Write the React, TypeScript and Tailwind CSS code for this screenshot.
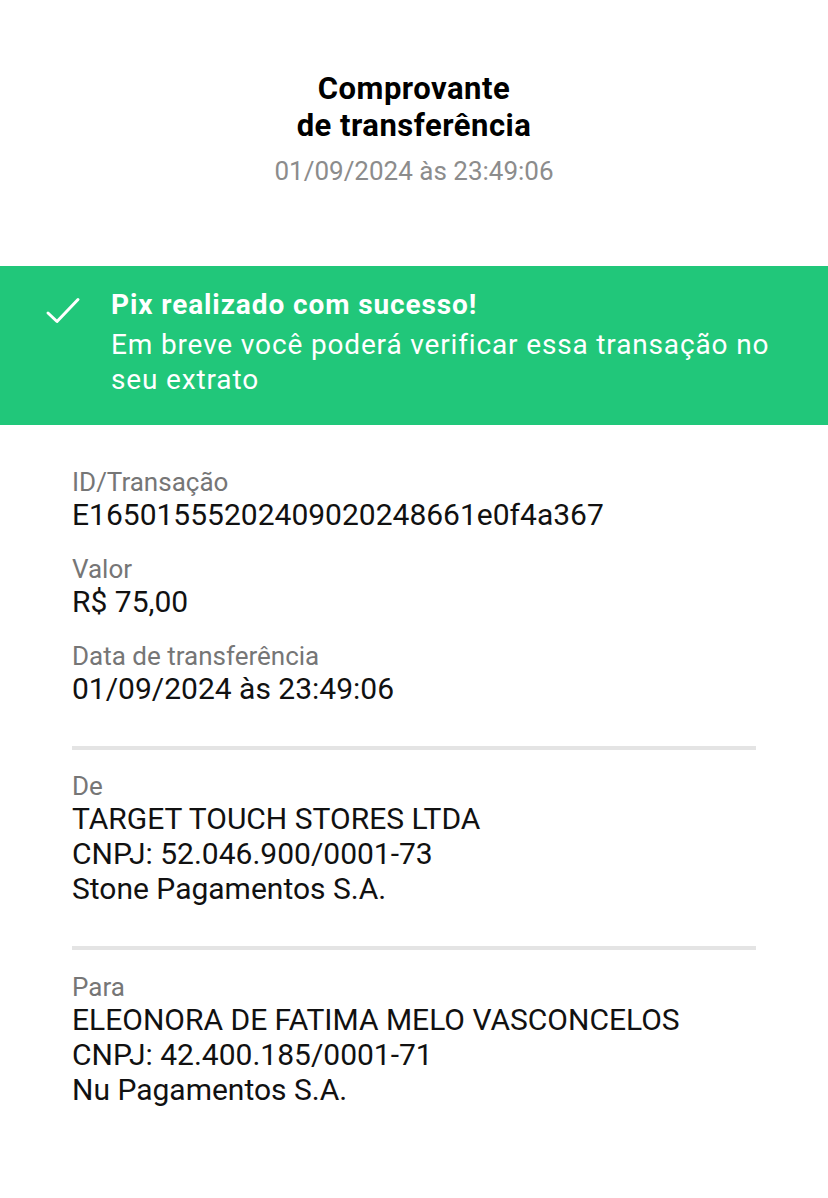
import React from "react"

const FONT = { fontFamily: 'Roboto, "Noto Sans", "Liberation Sans", sans-serif' }

function Field({ label, lines }: { label: string; lines: string[] }) {
  return (
    <div className="flex flex-col">
      <p className="text-[26px] leading-[30px] text-[#767676]">{label}</p>
      {lines.map((l) => (
        <p key={l} className="text-[30px] leading-[35px] text-[#111111]">
          {l}
        </p>
      ))}
    </div>
  )
}

export default function App() {
  return (
    <div className="min-h-[1198px] w-full bg-white" style={FONT}>
      {/* Header */}
      <div className="flex flex-col items-center pt-[70px] pb-[78px] text-center">
        <h1 className="text-[31px] font-bold leading-[37px] tracking-[0.5px] text-black">
          Comprovante
          <br />
          de transferência
        </h1>
        <p className="mt-[10px] text-[26px] leading-[34px] text-[#8c8c8c]">01/09/2024 às 23:49:06</p>
      </div>

      {/* Success banner */}
      <div className="flex bg-[#21c77a] pt-[21px] pb-[28px] text-white">
        <div className="flex w-[111px] shrink-0 justify-start pl-[44px] pt-[8px]">
          <svg width="38" height="30" viewBox="0 0 38 30" fill="none">
            <polyline
              points="4,18 13,26.5 34,4.5"
              stroke="white"
              strokeWidth="3"
              strokeLinecap="round"
              strokeLinejoin="round"
            />
          </svg>
        </div>
        <div className="flex flex-col pr-[40px]">
          <p className="text-[28px] font-bold leading-[36px] tracking-[0.9px]">Pix realizado com sucesso!</p>
          <p className="mt-[4px] text-[28px] leading-[35px] tracking-[0.85px]">
            Em breve você poderá verificar essa transação no seu extrato
          </p>
        </div>
      </div>

      {/* Details */}
      <div className="flex flex-col px-[72px] pt-[42px]">
        <div className="flex flex-col gap-[22px]">
          <Field label="ID/Transação" lines={["E16501555202409020248661e0f4a367"]} />
          <Field label="Valor" lines={["R$ 75,00"]} />
          <Field label="Data de transferência" lines={["01/09/2024 às 23:49:06"]} />
        </div>

        <div className="mt-[40px] mb-[21px] h-[4px] bg-[#e4e4e4]" />

        <Field label="De" lines={["TARGET TOUCH STORES LTDA", "CNPJ: 52.046.900/0001-73", "Stone Pagamentos S.A."]} />

        <div className="mt-[40px] mb-[22px] h-[4px] bg-[#e4e4e4]" />

        <Field
          label="Para"
          lines={["ELEONORA DE FATIMA MELO VASCONCELOS", "CNPJ: 42.400.185/0001-71", "Nu Pagamentos S.A."]}
        />
      </div>
    </div>
  )
}
